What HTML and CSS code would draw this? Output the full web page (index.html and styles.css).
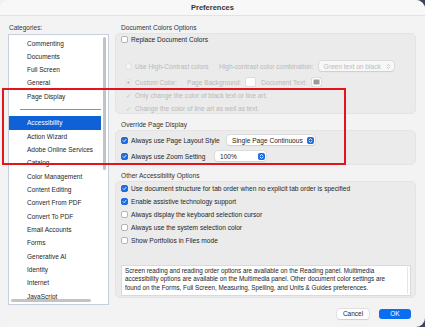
FILE: index.html
```html
<!DOCTYPE html>
<html lang="en">
<head>
    <meta charset="UTF-8">
    <title>Preferences</title>
    <link rel="stylesheet" href="styles.css">
</head>
<body>

<div class="window">
    <div class="titlebar">Preferences</div>

    <div class="content">
        <div class="sidebar">
            <div class="label">Categories:</div>
            <div class="list">
                <ul>
                    <li>Commenting</li>
                    <li>Documents</li>
                    <li>Full Screen</li>
                    <li>General</li>
                    <li>Page Display</li>
                    <li class="sep"><span></span></li>
                    <li class="current">Accessibility</li>
                    <li>Action Wizard</li>
                    <li>Adobe Online Services</li>
                    <li>Catalog</li>
                    <li>Color Management</li>
                    <li>Content Editing</li>
                    <li>Convert From PDF</li>
                    <li>Convert To PDF</li>
                    <li>Email Accounts</li>
                    <li>Forms</li>
                    <li>Generative AI</li>
                    <li>Identity</li>
                    <li>Internet</li>
                    <li>JavaScript</li>
                </ul>
                <div class="vscroll"></div>
                <div class="hscroll"></div>
            </div>
        </div>

        <div class="main">
            <div class="label">Document Colors Options</div>
            <div class="panel panel-colors">
                <div class="row r1">
                    <span class="check"></span>Replace Document Colors
                </div>
                <div class="row r2 off">
                    <span class="radio"></span>
                    <span class="w-contrast">Use High-Contrast colors</span>
                    <span>High-contrast color combination:</span>
                    <span class="select select-off">Green text on black<i class="updown"></i></span>
                </div>
                <div class="row r3 off">
                    <span class="radio dot"></span>
                    <span class="w-custom">Custom Color:</span>
                    <span>Page Background:</span>
                    <span class="swatch"></span>
                    <span>Document Text:</span>
                    <span class="swatch dark"></span>
                </div>
                <div class="row r4 off">
                    <span class="tick">&#10003;</span>Only change the color of black text or line art.
                </div>
                <div class="row r5 off">
                    <span class="tick">&#10003;</span>Change the color of line art as well as text.
                </div>
            </div>

            <div class="label gap">Override Page Display</div>
            <div class="panel panel-display">
                <div class="row">
                    <span class="check on"></span>
                    <span class="w-layout">Always use Page Layout Style</span>
                    <span class="select sel-layout">Single Page Continuous<i class="stepper"></i></span>
                </div>
                <div class="row">
                    <span class="check on"></span>
                    <span class="w-zoom">Always use Zoom Setting</span>
                    <span class="select sel-zoom">100%<i class="stepper"></i></span>
                </div>
            </div>

            <div class="label gap">Other Accessibility Options</div>
            <div class="panel panel-other">
                <div class="row"><span class="check on"></span>Use document structure for tab order when no explicit tab order is specified</div>
                <div class="row"><span class="check on"></span>Enable assistive technology support</div>
                <div class="row"><span class="check"></span>Always display the keyboard selection cursor</div>
                <div class="row"><span class="check"></span>Always use the system selection color</div>
                <div class="row"><span class="check"></span>Show Portfolios in Files mode</div>
                <div class="note">
                    Screen reading and reading order options are available on the Reading panel. Multimedia<br>
                    accessibility options are available on the Multimedia panel. Other document color settings are<br>
                    found on the Forms, Full Screen, Measuring, Spelling, and Units &amp; Guides preferences.
                    <div class="nscroll"></div>
                </div>
            </div>
        </div>
    </div>

    <div class="footer">
        <span class="btn">Cancel</span>
        <span class="btn ok">OK</span>
    </div>

    <div class="mark"></div>
</div>

</body>
</html>
```

FILE: styles.css
```css
*{
    margin: 0;
    padding: 0;
    box-sizing: border-box;
}
body{
    width: 425px;
    height: 327px;
    overflow: hidden;
    background: linear-gradient(90deg, #f2f2f2 70%, #3c4358 100%);
    font-family: "Liberation Sans", Arial, sans-serif;
    font-size: 6.5px;
    color: #262626;
}
.window{
    position: relative;
    width: 425px;
    height: 327px;
    background-color: #f3f3f3;
    border-radius: 9px;
    overflow: hidden;
}
.titlebar{
    height: 16px;
    line-height: 16px;
    text-align: center;
    font-size: 7.5px;
    font-weight: bold;
    color: #333;
    background-color: #f8f8f8;
    border-bottom: 1px solid #e2e2e2;
}
.content{
    display: flex;
    gap: 6px;
    padding: 6px 9px 0 8px;
}
.label{
    height: 11px;
    line-height: 11px;
    padding-left: 1px;
    color: #333;
}
.main .label{
    padding-left: 6px;
}
.label.gap{
    margin-top: 5px;
}

/* categories */
.sidebar{
    width: 101px;
    flex: none;
}
.sidebar .label{
    margin-bottom: 1px;
}
.list{
    position: relative;
    height: 271px;
    background-color: #fff;
    border: 1px solid #c6d0dd;
    overflow: hidden;
}
ul{
    list-style: none;
    padding-top: 1.5px;
}
li{
    height: 13.33px;
    line-height: 13.33px;
    padding-left: 18px;
    margin-right: 7px;
    color: #262626;
    white-space: nowrap;
}
li.sep{
    display: flex;
    align-items: center;
    padding: 0 0 0 11px;
}
li.sep span{
    display: block;
    width: 81px;
    height: 1px;
    background-color: #8f8f8f;
}
li.current{
    background-color: #1061d6;
    color: #fff;
}
.vscroll{
    position: absolute;
    right: 2px;
    top: 2px;
    width: 3px;
    height: 133px;
    border-radius: 2px;
    background-color: #c3c3c3;
}
.hscroll{
    position: absolute;
    left: 2px;
    bottom: 2px;
    width: 80px;
    height: 3px;
    border-radius: 2px;
    background-color: #c3c3c3;
}

/* right side */
.main{
    width: 301px;
    flex: none;
    font-size: 6.6px;
}
.panel{
    background-color: #ebebeb;
    border: 1px solid #e4e4e4;
    border-radius: 5px;
    padding-left: 5px;
}
.row{
    display: flex;
    align-items: center;
    height: 10px;
    white-space: nowrap;
}
.off{
    color: #b9b9b9;
}
.panel-colors{
    height: 81px;
}
.panel-colors .r2{
    height: 12px;
    margin-top: 16px;
}
.panel-colors .r3{
    height: 12px;
    margin-top: 4px;
}
.panel-colors .r4{
    margin-top: 2px;
}
.panel-colors .r5{
    margin-top: 3px;
}
.r2, .r3, .r4, .r5{
    padding-left: 4px;
}
.w-contrast{
    width: 84px;
}
.w-custom{
    width: 52px;
}
.panel-display{
    height: 35px;
    padding-top: 3px;
}
.panel-display .row{
    height: 12px;
    margin-bottom: 4px;
}
.w-layout{
    width: 96px;
}
.w-zoom{
    width: 84px;
}
.panel-other{
    height: 117px;
}
.panel-other .row{
    height: 13px;
}

/* controls */
.check{
    width: 7px;
    height: 7px;
    margin-right: 3px;
    border: 1px solid #b5b5b5;
    border-radius: 2px;
    background-color: #fff;
    flex: none;
}
.check.on{
    border-color: #1d6ce0;
    background: #1d6ce0 url("data:image/svg+xml;utf8,<svg xmlns='http://www.w3.org/2000/svg' viewBox='0 0 10 10'><path d='M2 5.2 L4.2 7.4 L8 2.6' fill='none' stroke='white' stroke-width='1.6' stroke-linecap='round' stroke-linejoin='round'/></svg>") center/100% no-repeat;
}
.radio{
    width: 7px;
    height: 7px;
    margin-right: 3px;
    border: 1px solid #dedede;
    border-radius: 50%;
    background-color: #f6f6f6;
    flex: none;
}
.radio.dot{
    background: radial-gradient(circle, #c4c4c4 0 1.2px, #f6f6f6 1.6px);
}
.tick{
    width: 7px;
    margin-right: 3px;
    font-size: 6px;
    color: #c4c4c4;
    text-align: center;
}
.select{
    position: relative;
    display: flex;
    align-items: center;
    height: 10px;
    padding-left: 5px;
    background-color: #fff;
    border-radius: 3px;
    box-shadow: 0 0 0 0.5px #cfcfcf, 0 0.5px 1px rgba(0,0,0,0.12);
    color: #262626;
}
.select-off{
    width: 75px;
    margin-left: 5px;
    background-color: #f7f7f7;
    color: #bcbcbc;
}
.sel-layout{
    width: 88px;
}
.sel-zoom{
    width: 51px;
}
.stepper{
    position: absolute;
    right: 1px;
    top: 1.5px;
    width: 7px;
    height: 7px;
    border-radius: 2px;
    background: #1d6ce0 url("data:image/svg+xml;utf8,<svg xmlns='http://www.w3.org/2000/svg' viewBox='0 0 10 10'><path d='M3 4 L5 2.2 L7 4 M3 6 L5 7.8 L7 6' fill='none' stroke='white' stroke-width='1.2' stroke-linecap='round' stroke-linejoin='round'/></svg>") center/100% no-repeat;
}
.updown{
    position: absolute;
    right: 2px;
    top: 1.5px;
    width: 7px;
    height: 7px;
    background: url("data:image/svg+xml;utf8,<svg xmlns='http://www.w3.org/2000/svg' viewBox='0 0 10 10'><path d='M3 4 L5 2.2 L7 4 M3 6 L5 7.8 L7 6' fill='none' stroke='%23c0c0c0' stroke-width='1.2' stroke-linecap='round' stroke-linejoin='round'/></svg>") center/100% no-repeat;
}
.swatch{
    width: 11px;
    height: 10px;
    margin: 0 5px 0 4px;
    background-color: #fff;
    border: 1px solid #dcdcdc;
    border-radius: 2px;
}
.swatch.dark{
    background-color: #9a9a9a;
    box-shadow: inset 0 0 0 1.5px #fff;
}
.note{
    position: relative;
    height: 31px;
    margin: 18px 4px 0 0;
    padding: 1px 3px;
    background-color: #fff;
    border: 1px solid #dadada;
    font-size: 6.3px;
    line-height: 8.4px;
    color: #222;
    white-space: nowrap;
}
.nscroll{
    position: absolute;
    right: 2px;
    top: 1px;
    bottom: 1px;
    width: 1px;
    background-color: #e6e6e6;
}

/* buttons */
.footer{
    display: flex;
    justify-content: flex-end;
    gap: 10px;
    padding: 4px 14px 0 0;
}
.btn{
    width: 32px;
    height: 10px;
    line-height: 10px;
    text-align: center;
    background-color: #fff;
    border-radius: 3px;
    box-shadow: 0 0 0 0.5px #cfcfcf, 0 0.5px 1px rgba(0,0,0,0.15);
    color: #262626;
}
.btn.ok{
    background-color: #0b6ef0;
    color: #fff;
    box-shadow: none;
}

/* red annotation */
.mark{
    position: absolute;
    left: 2px;
    top: 88px;
    width: 344px;
    height: 77px;
    border: 2px solid #e3141c;
}
```
